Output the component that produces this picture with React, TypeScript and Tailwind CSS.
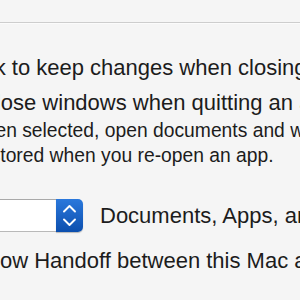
import React from 'react';

// Cropped view of the macOS "General" preferences pane.
const Stepper: React.FC = () => (
  <div className="flex h-[33px] w-[27px] shrink-0 items-center justify-center rounded-r-[5px] bg-gradient-to-b from-[#2a78dc] to-[#0c4fae] shadow-[0_1px_1px_rgba(0,0,0,0.25)]">
    <svg width="27" height="33" viewBox="0 0 27 33" fill="none">
      <path d="M8 12.5 L13.5 7 L19 12.5" stroke="white" strokeWidth="1.9" strokeLinecap="round" strokeLinejoin="round" />
      <path d="M8 20.5 L13.5 26 L19 20.5" stroke="white" strokeWidth="1.9" strokeLinecap="round" strokeLinejoin="round" />
    </svg>
  </div>
);

const App: React.FC = () => {
  return (
    <div className="h-[300px] w-[300px] overflow-hidden bg-[#f5f5f5] text-[#1c1c1c] [font-family:'Liberation_Sans',Arial,sans-serif]">
      <div className="h-[22px]" />
      <div className="h-px bg-[#cdcdcd]" />
      <div className="h-px bg-[#fbfbfb]" />

      <div className="mt-[31px] -ml-[31px] whitespace-nowrap text-[22px] leading-[25px]">
        Ask to keep changes when closing documents
      </div>
      <div className="mt-[10px] -ml-[20px] whitespace-nowrap text-[22px] leading-[25px]">
        Close windows when quitting an app
      </div>

      <div className="mt-[4px] -ml-[33.5px] whitespace-nowrap text-[19.3px] leading-[24.5px]">
        When selected, open documents and windows will not be
      </div>
      <div className="-ml-[26.5px] whitespace-nowrap text-[19.3px] leading-[24.5px]">
        restored when you re-open an app.
      </div>

      <div className="mt-[31px] flex items-center whitespace-nowrap">
        <div className="h-[33px] w-[56px] shrink-0 border-y border-[#b9b9b9] border-t-[#a9a9a9] bg-white" />
        <Stepper />
        <span className="ml-[17px] shrink-0 text-[22px] leading-[25px]">Documents, Apps, and Servers</span>
      </div>

      <div className="mt-[16px] -ml-[24.5px] whitespace-nowrap text-[22px] leading-[25px]">
        Allow Handoff between this Mac and your iCloud devices
      </div>
    </div>
  );
};

export default App;
